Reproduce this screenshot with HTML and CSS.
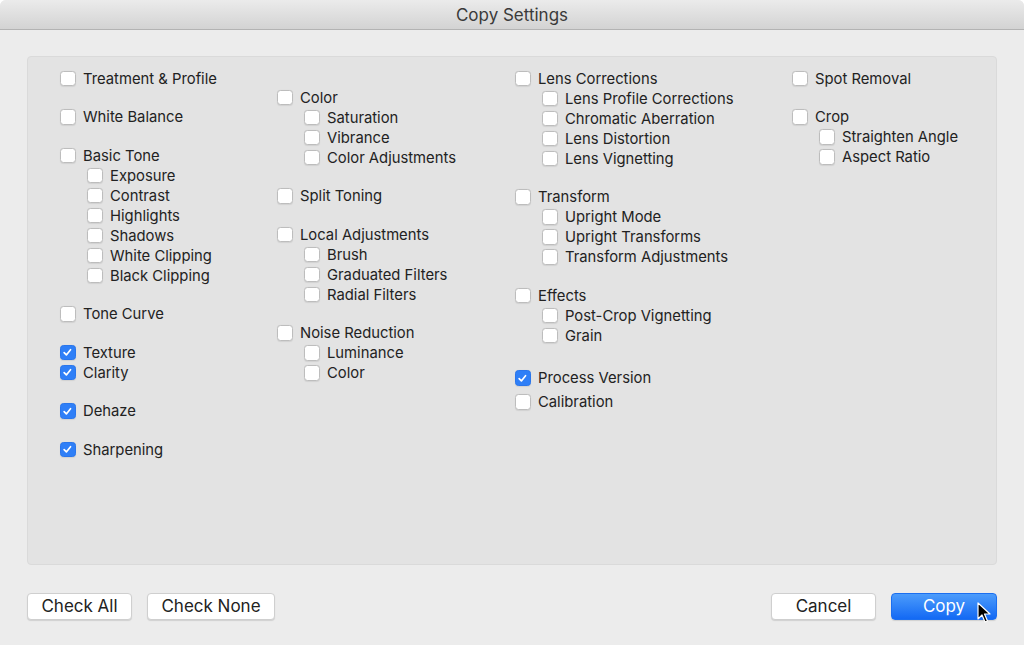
FILE: index.html
```html
<!DOCTYPE html>
<html>
<head>
<meta charset="utf-8">
<link rel="stylesheet" href="styles.css">
</head>
<body>
<div class="window">
  <div class="titlebar">Copy Settings</div>
  <div class="content">
    <div class="panel">
      <div class="col">
        <div class="group"><label class="item"><span class="cb"></span>Treatment &amp; Profile</label></div>
        <div class="group"><label class="item"><span class="cb"></span>White Balance</label></div>
        <div class="group">
          <label class="item"><span class="cb"></span>Basic Tone</label>
          <label class="item sub"><span class="cb"></span>Exposure</label>
          <label class="item sub"><span class="cb"></span>Contrast</label>
          <label class="item sub"><span class="cb"></span>Highlights</label>
          <label class="item sub"><span class="cb"></span>Shadows</label>
          <label class="item sub"><span class="cb"></span>White Clipping</label>
          <label class="item sub"><span class="cb"></span>Black Clipping</label>
        </div>
        <div class="group"><label class="item"><span class="cb"></span>Tone Curve</label></div>
        <div class="group">
          <label class="item"><span class="cb on"></span>Texture</label>
          <label class="item"><span class="cb on"></span>Clarity</label>
        </div>
        <div class="group"><label class="item"><span class="cb on"></span>Dehaze</label></div>
        <div class="group"><label class="item"><span class="cb on"></span>Sharpening</label></div>
      </div>
      <div class="col col2">
        <div class="group">
          <label class="item"><span class="cb"></span>Color</label>
          <label class="item sub"><span class="cb"></span>Saturation</label>
          <label class="item sub"><span class="cb"></span>Vibrance</label>
          <label class="item sub"><span class="cb"></span>Color Adjustments</label>
        </div>
        <div class="group"><label class="item"><span class="cb"></span>Split Toning</label></div>
        <div class="group">
          <label class="item"><span class="cb"></span>Local Adjustments</label>
          <label class="item sub"><span class="cb"></span>Brush</label>
          <label class="item sub"><span class="cb"></span>Graduated Filters</label>
          <label class="item sub"><span class="cb"></span>Radial Filters</label>
        </div>
        <div class="group">
          <label class="item"><span class="cb"></span>Noise Reduction</label>
          <label class="item sub"><span class="cb"></span>Luminance</label>
          <label class="item sub"><span class="cb"></span>Color</label>
        </div>
      </div>
      <div class="col">
        <div class="group">
          <label class="item"><span class="cb"></span>Lens Corrections</label>
          <label class="item sub"><span class="cb"></span>Lens Profile Corrections</label>
          <label class="item sub"><span class="cb"></span>Chromatic Aberration</label>
          <label class="item sub"><span class="cb"></span>Lens Distortion</label>
          <label class="item sub"><span class="cb"></span>Lens Vignetting</label>
        </div>
        <div class="group">
          <label class="item"><span class="cb"></span>Transform</label>
          <label class="item sub"><span class="cb"></span>Upright Mode</label>
          <label class="item sub"><span class="cb"></span>Upright Transforms</label>
          <label class="item sub"><span class="cb"></span>Transform Adjustments</label>
        </div>
        <div class="group">
          <label class="item"><span class="cb"></span>Effects</label>
          <label class="item sub"><span class="cb"></span>Post-Crop Vignetting</label>
          <label class="item sub"><span class="cb"></span>Grain</label>
        </div>
        <div class="group group-process">
          <label class="item"><span class="cb on"></span>Process Version</label>
          <label class="item item-calib"><span class="cb"></span>Calibration</label>
        </div>
      </div>
      <div class="col">
        <div class="group"><label class="item"><span class="cb"></span>Spot Removal</label></div>
        <div class="group">
          <label class="item"><span class="cb"></span>Crop</label>
          <label class="item sub"><span class="cb"></span>Straighten Angle</label>
          <label class="item sub"><span class="cb"></span>Aspect Ratio</label>
        </div>
      </div>
    </div>
    <div class="buttons">
      <div class="btn-group">
        <button class="btn btn-checkall">Check All</button>
        <button class="btn btn-checknone">Check None</button>
      </div>
      <div class="btn-group">
        <button class="btn btn-cancel">Cancel</button>
        <button class="btn btn-copy">Copy</button>
      </div>
    </div>
  </div>
  <svg class="cursor" width="14" height="22" viewBox="0 0 14 22">
    <path d="M1 1 L1 17 L5 13 L8 20 L10.5 19 L7.5 12 L13 12 Z" fill="#000" stroke="#fff" stroke-width="1.2" stroke-linejoin="round"/>
  </svg>
</div>
</body>
</html>
```

FILE: styles.css
```css
* { box-sizing: border-box; }
html, body { margin: 0; padding: 0; }
body {
  width: 1024px;
  height: 645px;
  background: #ffffff;
  font-family: Inter, "Noto Sans", "Liberation Sans", sans-serif;
  overflow: hidden;
}
.window {
  position: relative;
  width: 1024px;
  height: 645px;
  background: #ececec;
  border-radius: 6px 6px 0 0;
  overflow: hidden;
  display: flex;
  flex-direction: column;
}
.titlebar {
  height: 30px;
  flex: none;
  background: linear-gradient(#ebebeb, #d3d3d3);
  border-bottom: 1px solid #b3b3b3;
  text-align: center;
  font-size: 17px;
  line-height: 30px;
  color: #3a3a3a;
}
.content {
  flex: 1;
  padding: 26px 27px 0 27px;
  display: flex;
  flex-direction: column;
}
.panel {
  height: 509px;
  background: #e3e3e3;
  border: 1px solid #dadada;
  border-radius: 4px;
  display: grid;
  grid-template-columns: 217px 238px 277px 1fr;
  padding: 11.5px 0 0 32px;
  align-items: start;
}
.col { display: flex; flex-direction: column; }
.col2 { padding-top: 19px; }
.group { display: flex; flex-direction: column; margin-bottom: 18.5px; }
.group-process { margin-top: 4px; }
.item {
  display: flex;
  align-items: center;
  height: 20px;
  font-size: 14.8px;
  color: #222;
  white-space: nowrap;
}
.item-calib { margin-top: 4px; }
.item.sub { padding-left: 27px; }
.cb {
  width: 15.5px;
  height: 15.5px;
  flex: none;
  margin-right: 7.5px;
  background: #fff;
  border: 1px solid #bdbdbd;
  border-radius: 3.5px;
  box-shadow: 0 0.5px 1px rgba(0,0,0,0.08);
}
.cb.on {
  border-color: #2a76ec;
  background: #2f7ff7 url("data:image/svg+xml;utf8,<svg xmlns='http://www.w3.org/2000/svg' width='15' height='15' viewBox='0 0 15 15'><path d='M3.6 7.6 L6.2 10.3 L11 4.2' fill='none' stroke='white' stroke-width='1.9' stroke-linecap='round' stroke-linejoin='round'/></svg>") center/13px 13px no-repeat;
}
.buttons {
  margin-top: 28px;
  display: flex;
  justify-content: space-between;
}
.btn-group { display: flex; gap: 15px; }
.btn {
  height: 27px;
  font-family: Inter, "Noto Sans", "Liberation Sans", sans-serif;
  font-size: 17px;
  line-height: 25px;
  color: #222;
  background: #fff;
  border: 1px solid #cfcfcf;
  border-radius: 4px;
  box-shadow: 0 1px 1px rgba(0,0,0,0.12);
  padding: 0 0 1px 0;
}
.btn-checkall { width: 105px; }
.btn-checknone { width: 128px; }
.btn-cancel { width: 105px; }
.btn-copy {
  width: 106px;
  color: #fff;
  border-color: #1b6ff0;
  background: linear-gradient(#4c9cfb, #1369f4);
}
.cursor {
  position: absolute;
  left: 977px;
  top: 602px;
}
```
